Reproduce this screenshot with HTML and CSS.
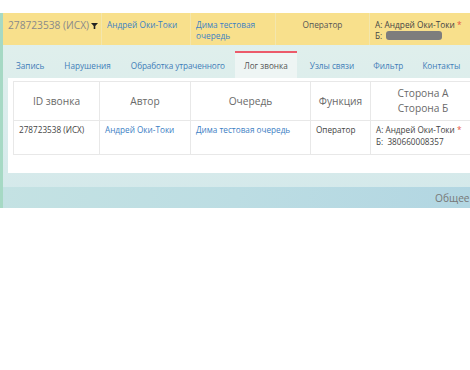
FILE: index.html
```html
<!DOCTYPE html>
<html lang="ru">
<head>
<meta charset="utf-8">
<link rel="stylesheet" href="styles.css">
</head>
<body>
<div class="top-space"></div>
<div class="app">
  <div class="call-head">
    <div class="hc hc-id"><span class="id-text">278723538 (ИСХ)</span><svg class="funnel" width="7" height="6" viewBox="0 0 7 6"><path d="M0 0H7L4.3 3V6H2.7V3Z" fill="#222"/></svg></div>
    <div class="hc"><a class="lnk">Андрей Оки-Токи</a></div>
    <div class="hc hc-wrap"><a class="lnk">Дима тестовая очередь</a></div>
    <div class="hc hc-center">Оператор</div>
    <div class="hc hc-last">А: Андрей Оки-Токи <span class="req">*</span><br>Б: <span class="redact"></span></div>
  </div>
  <div class="tabs">
    <div class="tab">Запись</div>
    <div class="tab">Нарушения</div>
    <div class="tab tab-long">Обработка утраченного</div>
    <div class="tab active">Лог звонка</div>
    <div class="tab tab-r">Узлы связи</div>
    <div class="tab tab-r">Фильтр</div>
    <div class="tab tab-r">Контакты</div>
  </div>
  <div class="panel">
    <table class="log">
      <colgroup>
        <col class="c1"><col class="c2"><col class="c3"><col class="c4"><col class="c5">
      </colgroup>
      <thead>
        <tr>
          <th>ID звонка</th>
          <th>Автор</th>
          <th>Очередь</th>
          <th>Функция</th>
          <th>Сторона А<br>Сторона Б</th>
        </tr>
      </thead>
      <tbody>
        <tr>
          <td>278723538 (ИСХ)</td>
          <td><a class="lnk">Андрей Оки-Токи</a></td>
          <td><a class="lnk">Дима тестовая очередь</a></td>
          <td>Оператор</td>
          <td>А: Андрей Оки-Токи <span class="req">*</span><br>Б:&nbsp; 380660008357</td>
        </tr>
      </tbody>
    </table>
  </div>
  <div class="footer-bar"><span class="footer-text">Общее</span></div>
</div>
</body>
</html>
```

FILE: styles.css
```css
html, body {
  margin: 0;
  padding: 0;
  background: #fff;
  font-family: "Open Sans", "DejaVu Sans", sans-serif;
  overflow: hidden;
}
.top-space {
  height: 13px;
}
.app {
  width: 467px;
  overflow: hidden;
  border-left: 3px solid #a6d9c4;
  background: linear-gradient(180deg, #e2f0ec 0%, #d9ecec 60%, #d3e8ea 100%);
}
.call-head {
  display: grid;
  grid-template-columns: 99px 89px 85px 94px 100px;
  background: #f8e08c;
  height: 32px;
}
.hc {
  border-right: 1px solid #f3e6ad;
  padding: 6px 5px 0 5px;
  font-size: 8.3px;
  line-height: 11px;
  color: #555;
  white-space: nowrap;
}
.hc-wrap {
  white-space: normal;
}
.hc-id {
  padding-left: 5px;
  padding-top: 5px;
  display: flex;
  align-items: flex-start;
}
.id-text {
  font-size: 10.2px;
  color: #8a8a8a;
  line-height: 14px;
  white-space: nowrap;
}
.funnel {
  margin-left: 2px;
  margin-top: 5px;
  flex: none;
}
.hc-center {
  text-align: center;
}
.hc-last {
  border-right: none;
  padding-left: 5px;
  color: #444;
}
.lnk {
  color: #3c80c4;
  text-decoration: none;
}
.req {
  color: #e5533f;
}
.redact {
  display: inline-block;
  width: 56px;
  height: 9px;
  border-radius: 3px;
  background: #7d7d7d;
  vertical-align: -1px;
  margin-left: 2px;
}
.tabs {
  display: flex;
  padding: 6px 0 0 3px;
  height: 27px;
}
.tab {
  font-size: 8.2px;
  color: #3f7db8;
  padding: 9px 10px 0 10px;
  height: 18px;
  white-space: nowrap;
}
.tab-long {
  padding-left: 10px;
  letter-spacing: -0.1px;
}
.tab-r {
  padding-right: 9px;
}
.active {
  background: #eef5f4;
  border-top: 2px solid #ec5a6a;
  padding: 7px 9px 0 9px;
  color: #555;
  margin: 0 3px 0 0;
}
.panel {
  background: #fff;
  margin-left: 5px;
  padding: 3px 0 18px 5px;
}
.log {
  border-collapse: collapse;
  table-layout: fixed;
  width: 462px;
}
.log th, .log td {
  border: 1px solid #e8e8e8;
}
.log th {
  font-weight: normal;
  font-size: 10.2px;
  line-height: 15px;
  color: #6a6a6a;
  height: 38px;
  padding: 0 4px;
  text-align: center;
}
.log td {
  font-size: 8.2px;
  line-height: 12px;
  color: #444;
  padding: 3px 5px 6px 5px;
  vertical-align: top;
  white-space: nowrap;
}
.c1 { width: 86px; }
.c2 { width: 91px; }
.c3 { width: 120px; }
.c4 { width: 60px; }
.c5 { width: 105px; }
.footer-bar {
  margin-top: 14px;
  height: 21px;
  background: linear-gradient(100deg, #c4e2e3 0%, #bcdde3 50%, #b2d6e2 100%);
  position: relative;
}
.footer-text {
  position: absolute;
  left: 432px;
  top: 4px;
  font-size: 10.2px;
  color: #777;
}
```
